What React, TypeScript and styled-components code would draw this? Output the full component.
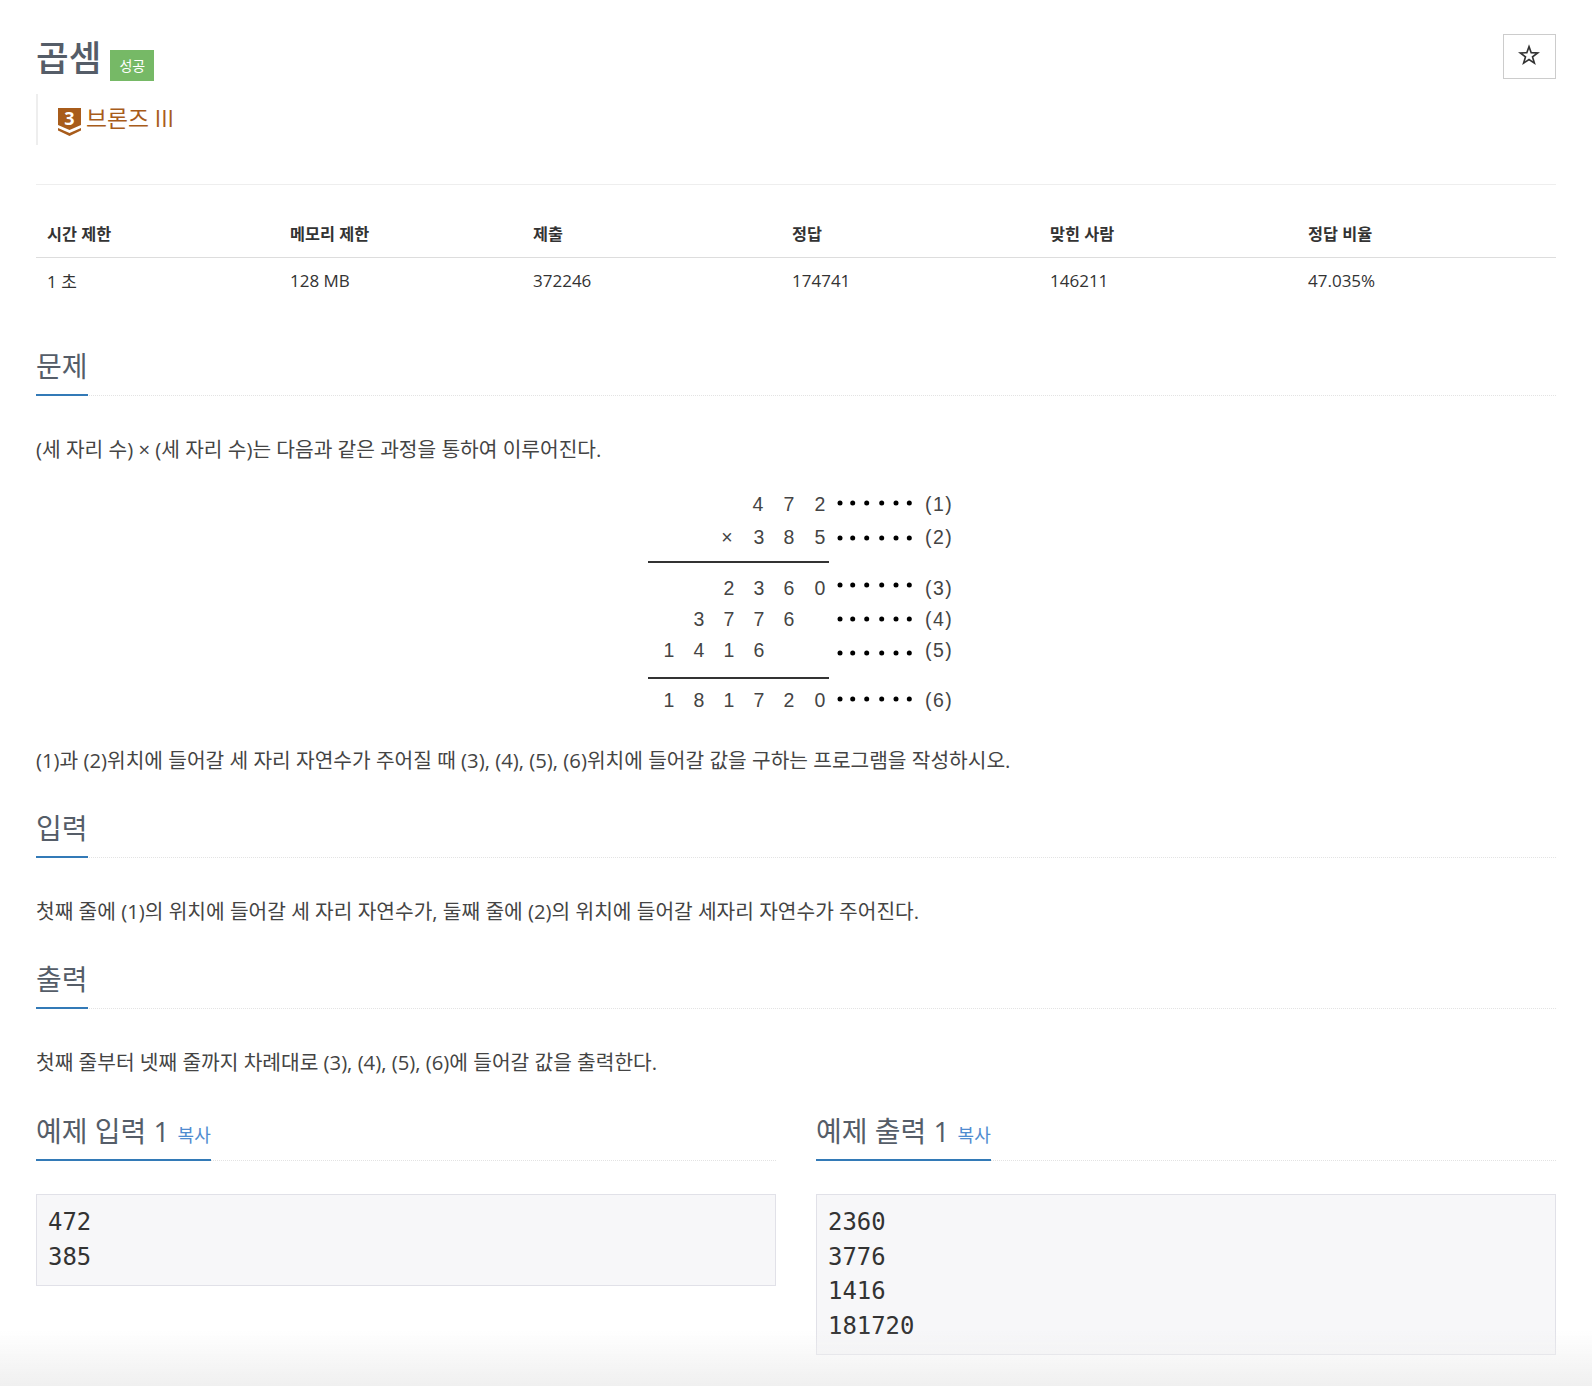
import React from "react";
import styled, { createGlobalStyle } from "styled-components";

const GlobalStyle = createGlobalStyle`
  html, body {
    margin: 0;
    padding: 0;
    background: #fff;
    color: #333;
    font-family: "Open Sans", "Noto Sans CJK KR", sans-serif;
  }
`;

const Page = styled.div`
  padding: 0 36px;
  height: 1386px;
  box-sizing: border-box;
  overflow: hidden;
`;

const TitleBlock = styled.header`
  display: flex;
  justify-content: space-between;
  align-items: flex-start;
  padding-top: 34px;
  height: 150px;
  border-bottom: 1px solid #eee;
`;

const TitleRow = styled.div`
  display: flex;
  align-items: flex-end;
  gap: 9px;
  height: 47px;
`;

const Title = styled.h1`
  margin: 0;
  font-size: 35.5px;
  line-height: 47px;
  font-weight: 500;
  color: #555d68;
`;

const Label = styled.span`
  display: flex;
  align-items: center;
  justify-content: center;
  box-sizing: border-box;
  width: 44px;
  height: 31px;
  padding-bottom: 2px;
  background: #76b966;
  color: #fff;
  font-size: 14px;
`;

const Tier = styled.div`
  display: flex;
  align-items: center;
  gap: 5px;
  height: 51px;
  margin-top: 13px;
  padding-left: 20px;
  border-left: 2px solid #eee;
  color: #a85c1b;
  font-size: 22.8px;

  svg {
    margin-top: 5px;
    overflow: visible;
  }
`;

const TierName = styled.span`
  padding-bottom: 4px;
`;

const StarButton = styled.button`
  display: flex;
  align-items: center;
  justify-content: center;
  width: 53px;
  height: 45px;
  padding: 0 2px 3px 0;
  background: #fff;
  border: 1px solid #ccc;
  color: #333;
`;

const InfoTable = styled.table`
  width: 100%;
  margin-top: 24px;
  border-collapse: collapse;
  table-layout: fixed;
  font-size: 17px;

  th {
    height: 48px;
    padding: 0 11px;
    text-align: left;
    font-size: 16.3px;
    font-weight: 700;
    border-bottom: 1px solid #ddd;
  }

  td {
    height: 45px;
    padding: 0 11px;
  }
`;

const Section = styled.section<{ $top: number }>`
  margin-top: ${({ $top }) => $top}px;
`;

const Heading = styled.div`
  display: flex;
  border-bottom: 1px dotted #e3e3e3;
`;

const HeadingText = styled.h2`
  margin: 0 0 -1px;
  padding-bottom: 8px;
  font-size: 28px;
  line-height: 40px;
  font-weight: 400;
  color: #555d68;
  border-bottom: 2px solid #337ab7;
  white-space: nowrap;
`;

const CopyLink = styled.a`
  margin-left: 8px;
  font-size: 18px;
  line-height: 1;
  color: #4f8bd0;
`;

const Body = styled.p<{ $flush?: boolean }>`
  margin: 0;
  padding-top: ${({ $flush }) => ($flush ? 0 : 34)}px;
  font-size: 20.3px;
  line-height: 38px;
  color: #444;
`;

const Figure = styled.div`
  display: flex;
  justify-content: center;
  padding: 11px 0 22px;
`;

const Samples = styled.div`
  display: grid;
  grid-template-columns: 740px 740px;
  column-gap: 40px;
  margin-top: 30px;
`;

const SampleBox = styled.pre`
  margin: 33px 0 0;
  padding: 10px 11px 11px;
  background: #f7f7f9;
  border: 1px solid #e1e1e8;
  font-family: "DejaVu Sans Mono", monospace;
  font-size: 23.9px;
  line-height: 34.5px;
  color: #333;
`;

const BottomFade = styled.div`
  position: fixed;
  left: 0;
  right: 0;
  bottom: 0;
  height: 56px;
  background: linear-gradient(to bottom, rgba(240, 240, 240, 0), #f0f0f0);
  pointer-events: none;
`;

const FigureText = styled.text`
  font-family: "Liberation Sans", sans-serif;
  font-size: 19.5px;
  fill: #444;
`;

const BronzeIcon = () => (
  <svg width="23" height="28" viewBox="0 0 23 28">
    <path d="M0 0h23v17l-11.5 5L0 17z" fill="#a85c1b" />
    <path d="M0 20l11.5 5L23 20v2.5L11.5 28 0 22.5z" fill="#a85c1b" />
    <text
      x="11.5"
      y="17"
      textAnchor="middle"
      fontFamily="Open Sans"
      fontWeight="700"
      fontSize="18"
      fill="#fff"
    >
      3
    </text>
  </svg>
);

const StarIcon = () => (
  <svg width="22" height="22" viewBox="0 0 20 20">
    <path
      d="M10 2.4l2 5.5 5.9.2-4.7 3.6 1.7 5.7L10 14.1l-4.9 3.3 1.7-5.7-4.7-3.6 5.9-.2z"
      fill="none"
      stroke="#333"
      strokeWidth="1.5"
    />
  </svg>
);

// 이미지 자리: 곱셈 과정 그림
const rows: { y: number; cells: [number, string][]; dotsY: number; label: string }[] = [
  { y: 32, cells: [[128, "4"], [159, "7"], [190, "2"]], dotsY: 24, label: "(1)" },
  { y: 65, cells: [[97, "×"], [129, "3"], [159, "8"], [190, "5"]], dotsY: 59, label: "(2)" },
  { y: 116, cells: [[99, "2"], [129, "3"], [159, "6"], [190, "0"]], dotsY: 106, label: "(3)" },
  { y: 147, cells: [[69, "3"], [99, "7"], [129, "7"], [159, "6"]], dotsY: 140, label: "(4)" },
  { y: 178, cells: [[39, "1"], [69, "4"], [99, "1"], [129, "6"]], dotsY: 174, label: "(5)" },
  { y: 228, cells: [[39, "1"], [69, "8"], [99, "1"], [129, "7"], [159, "2"], [190, "0"]], dotsY: 220, label: "(6)" },
];

const dotXs = [210, 222.7, 236.7, 251.7, 266, 279.3];

const MultiplicationFigure = () => (
  <svg width="320" height="240" viewBox="6 0 320 240">
    {rows.map((row) => (
      <g key={row.label}>
        {row.cells.map(([x, ch]) => (
          <FigureText key={x} x={x} y={row.y} textAnchor="middle">
            {ch}
          </FigureText>
        ))}
        {dotXs.map((x) => (
          <circle key={x} cx={x} cy={row.dotsY} r="2.5" fill="#000" />
        ))}
        <FigureText x={295} y={row.y} letterSpacing="1.5">
          {row.label}
        </FigureText>
      </g>
    ))}
    <rect x="18" y="82" width="181" height="2" fill="#333" />
    <rect x="18" y="198" width="181" height="2" fill="#333" />
  </svg>
);

const columns = [
  { title: "시간 제한", value: "1 초", width: 243 },
  { title: "메모리 제한", value: "128 MB", width: 243 },
  { title: "제출", value: "372246", width: 259 },
  { title: "정답", value: "174741", width: 258 },
  { title: "맞힌 사람", value: "146211", width: 258 },
  { title: "정답 비율", value: "47.035%", width: 259 },
];

const App = () => {
  return (
    <Page>
      <GlobalStyle />
      <TitleBlock>
        <div>
          <TitleRow>
            <Title>곱셈</Title>
            <Label>성공</Label>
          </TitleRow>
          <Tier>
            <BronzeIcon />
            <TierName>브론즈 III</TierName>
          </Tier>
        </div>
        <StarButton aria-label="즐겨찾기">
          <StarIcon />
        </StarButton>
      </TitleBlock>

      <InfoTable>
        <colgroup>
          {columns.map((c) => (
            <col key={c.title} width={c.width} />
          ))}
        </colgroup>
        <thead>
          <tr>
            {columns.map((c) => (
              <th key={c.title}>{c.title}</th>
            ))}
          </tr>
        </thead>
        <tbody>
          <tr>
            {columns.map((c) => (
              <td key={c.title}>{c.value}</td>
            ))}
          </tr>
        </tbody>
      </InfoTable>

      <Section $top={43}>
        <Heading>
          <HeadingText>문제</HeadingText>
        </Heading>
        <Body>(세 자리 수) × (세 자리 수)는 다음과 같은 과정을 통하여 이루어진다.</Body>
        <Figure>
          <MultiplicationFigure />
        </Figure>
        <Body $flush>
          (1)과 (2)위치에 들어갈 세 자리 자연수가 주어질 때 (3), (4), (5), (6)위치에 들어갈 값을 구하는 프로그램을 작성하시오.
        </Body>
      </Section>

      <Section $top={29}>
        <Heading>
          <HeadingText>입력</HeadingText>
        </Heading>
        <Body>첫째 줄에 (1)의 위치에 들어갈 세 자리 자연수가, 둘째 줄에 (2)의 위치에 들어갈 세자리 자연수가 주어진다.</Body>
      </Section>

      <Section $top={29}>
        <Heading>
          <HeadingText>출력</HeadingText>
        </Heading>
        <Body>첫째 줄부터 넷째 줄까지 차례대로 (3), (4), (5), (6)에 들어갈 값을 출력한다.</Body>
      </Section>

      <Samples>
        <div>
          <Heading>
            <HeadingText>
              예제 입력 1<CopyLink>복사</CopyLink>
            </HeadingText>
          </Heading>
          <SampleBox>{"472\n385"}</SampleBox>
        </div>
        <div>
          <Heading>
            <HeadingText>
              예제 출력 1<CopyLink>복사</CopyLink>
            </HeadingText>
          </Heading>
          <SampleBox>{"2360\n3776\n1416\n181720"}</SampleBox>
        </div>
      </Samples>
      <BottomFade />
    </Page>
  );
};

export default App;
